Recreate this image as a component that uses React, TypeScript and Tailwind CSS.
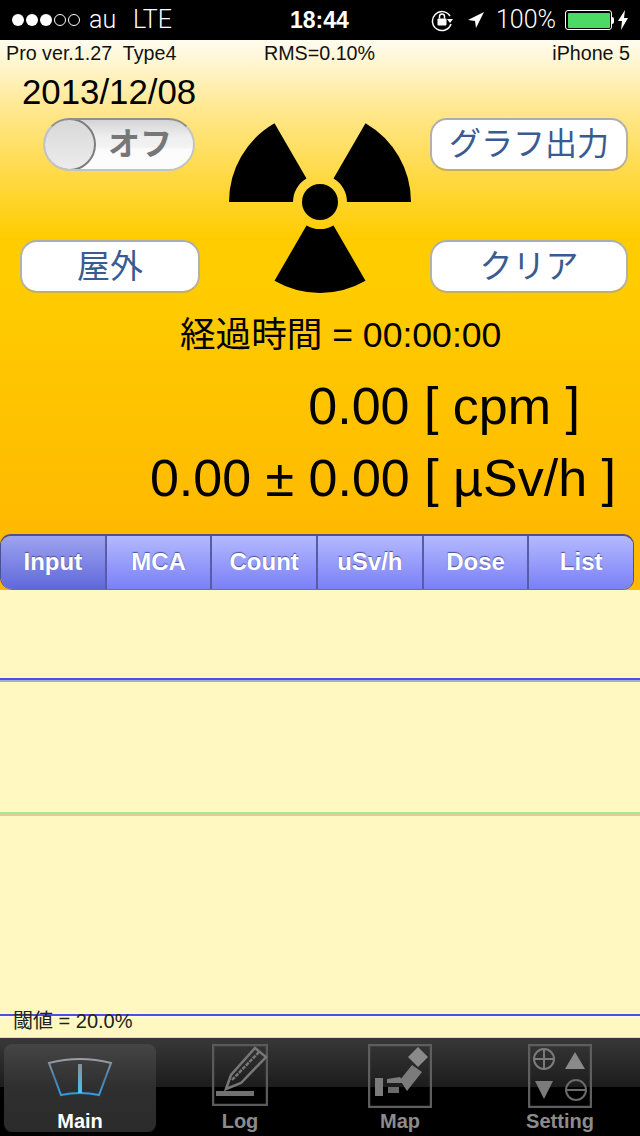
const sans = "font-['Liberation_Sans','Noto_Sans_CJK_JP',sans-serif]";

const tabs = ["Input", "MCA", "Count", "uSv/h", "Dose", "List"];

function StatusBar() {
  return (
    <div className="flex h-10 items-center bg-black text-white font-['Roboto',sans-serif] text-[25px] font-light">
      <div className="ml-[12px] flex w-[68px] gap-[2px]">
        {[1, 1, 1, 0, 0].map((on, i) => (
          <span key={i} className={on ? "size-[12px] rounded-full bg-white" : "size-[12px] rounded-full border border-white"} />
        ))}
      </div>
      <span className="ml-[9px] w-[44px]">au</span>
      <span className="w-[157px]">LTE</span>
      <span className={`w-[141px] text-[23px] font-bold ${sans}`}>18:44</span>
      <svg width="24" height="24" viewBox="0 0 24 24" fill="none" className="-ml-[1px]">
        <path d="M20 8 A9.5 9.5 0 1 0 21 16" stroke="#fff" strokeWidth="1.5" />
        <path d="M17 11h6l-3 4z" fill="#fff" />
        <rect x="7.5" y="10.5" width="9" height="7" rx="1" fill="#fff" />
        <path d="M9.5 10.5V8.5a2.5 2.5 0 0 1 5 0v2" stroke="#fff" strokeWidth="1.5" />
      </svg>
      <svg width="18" height="18" viewBox="0 0 18 18" className="ml-[13px]">
        <path d="M17 1 1 9l7 1 1 7z" fill="#fff" />
      </svg>
      <span className="ml-[11px] w-[69px]">100%</span>
      <div className="flex items-center">
        <div className="h-[20px] w-[47px] rounded-[3px] border border-white p-[1.5px]">
          <div className="h-full w-full rounded-[1px] bg-[#4cd964]" />
        </div>
        <div className="h-[7px] w-[2px] rounded-r-sm bg-white" />
      </div>
      <svg width="10" height="20" viewBox="0 0 10 20" className="ml-[4px]">
        <path d="M7 0 0 11h4l-1 9 7-12H6z" fill="#fff" />
      </svg>
    </div>
  );
}

function RadiationIcon() {
  return (
    <svg width="182" height="182" viewBox="-91 -91 182 182" className="block">
      <circle r="18" fill="#000" />
      <path d="M27 0H91A91 91 0 0 0 45.5 -78.8L13.5 -23.4A27 27 0 0 1 27 0Z" fill="#000" />
      <path d="M-27 0H-91A91 91 0 0 1 -45.5 -78.8L-13.5 -23.4A27 27 0 0 0 -27 0Z" fill="#000" />
      <path d="M-13.5 23.4 -45.5 78.8A91 91 0 0 0 45.5 78.8L13.5 23.4A27 27 0 0 1 -13.5 23.4Z" fill="#000" />
    </svg>
  );
}

function PillButton({ label, className }: { label: string; className: string }) {
  return (
    <div
      className={`flex h-[53px] items-center justify-center rounded-[17px] border-2 border-t-[#a9adb6] border-x-[#b4b2a8] border-b-[#c8ad5c] bg-white leading-none text-[#3a5a94] ${className}`}
    >
      {label}
    </div>
  );
}

function Toggle() {
  return (
    <div className="relative ml-[43px] flex h-[53px] w-[152px] items-center justify-end overflow-hidden rounded-full border-2 border-t-[#8f8f8f] border-x-[#c4c4c4] border-b-[#c2c2c2] bg-[linear-gradient(#d4d4d4,#efefef_35%,#f2f2f2_55%,#fbfbfb_60%,#fdfdfd)] pr-[21px]">
      <span className="text-[32px] font-bold leading-none text-[#777]">オフ</span>
      <div className="absolute -left-[2px] -top-[2px] size-[53px] rounded-full border-2 border-[#7d7d7d] bg-[linear-gradient(#d8d8d8,#ececec)]" />
    </div>
  );
}

function TabStrip() {
  return (
    <div className="mt-[26px] flex h-[57px] w-[634px] overflow-hidden rounded-[11px] rounded-bl-[13px] border border-t-2 border-[#4c5290] border-b-[#6469c4]">
      {tabs.map((t, i) => (
        <div
          key={t}
          className={`flex flex-1 items-center justify-center pb-[1px] text-[24px] font-bold text-white [text-shadow:0_-1px_1px_#4a4f96] ${
            i === 0
              ? "bg-[linear-gradient(#9ea3f0,#5f68da)]"
              : "bg-[linear-gradient(#b4b9ff,#7a80f6)]"
          } ${i > 0 ? "border-l-2 border-[#565ca6]" : ""}`}
        >
          {t}
        </div>
      ))}
    </div>
  );
}

function MainIcon() {
  return (
    <svg width="66" height="42" viewBox="0 0 66 42" fill="none">
      <defs>
        <linearGradient id="gauge" x1="0" y1="0" x2="0" y2="1">
          <stop offset="0" stopColor="#9a9da3" />
          <stop offset="0.5" stopColor="#4b7fa8" />
          <stop offset="1" stopColor="#2f9de0" />
        </linearGradient>
        <linearGradient id="needle" x1="0" y1="0" x2="0" y2="1">
          <stop offset="0" stopColor="#8a8d92" />
          <stop offset="1" stopColor="#45c4f5" />
        </linearGradient>
      </defs>
      <path d="M2 7Q33 -1 64 7L52 39Q33 35 14 39Z" stroke="url(#gauge)" strokeWidth="2" />
      <rect x="31" y="8" width="4" height="29" fill="url(#needle)" />
    </svg>
  );
}

function LogIcon() {
  return (
    <svg width="56" height="62" viewBox="0 0 56 62" fill="none">
      <rect x="1" y="1" width="54" height="60" stroke="#5a5a5a" strokeWidth="2.5" />
      <path d="M14 45 19 31 43 4 54 13 29 39Z" stroke="#777" strokeWidth="2.5" />
      <path d="M20 36 47 8" stroke="#777" strokeWidth="2.5" strokeDasharray="4 1" />
      <rect x="4" y="47" width="38" height="5" fill="#717171" />
    </svg>
  );
}

function MapIcon() {
  return (
    <svg width="64" height="64" viewBox="0 0 64 64" fill="none">
      <rect x="1" y="1" width="62" height="62" stroke="#5e5e5e" strokeWidth="2.5" />
      <path d="M50 3 60 13 50 23 40 13z" fill="#8a8a8a" />
      <path d="M44 21 54 28 39 47 32 36z" fill="#7b7b7b" />
      <rect x="7" y="34" width="8" height="18" fill="#7b7b7b" />
      <path d="M19 35 32 33 36 39H19z" fill="#7b7b7b" />
      <rect x="20" y="43" width="11" height="6" fill="#6a6a6a" />
    </svg>
  );
}

function SettingIcon() {
  return (
    <svg width="64" height="64" viewBox="0 0 64 64" fill="none">
      <rect x="1" y="1" width="62" height="62" stroke="#5e5e5e" strokeWidth="2.5" />
      <circle cx="16" cy="15" r="10" stroke="#7b7b7b" strokeWidth="2" />
      <path d="M6 15H26M16 5V25" stroke="#7b7b7b" strokeWidth="2" />
      <path d="M47 8 57 25H37z" fill="#8a8a8a" />
      <path d="M7 37H25L16 55z" fill="#7b7b7b" />
      <circle cx="48" cy="46" r="10" stroke="#6a6a6a" strokeWidth="2" />
      <path d="M38 46H58" stroke="#6a6a6a" strokeWidth="2" />
    </svg>
  );
}

function BottomTab({ label, active, children }: { label: string; active?: boolean; children: React.ReactNode }) {
  return (
    <div
      className={`flex h-[88px] w-[152px] flex-col items-center justify-between rounded-[8px] ${
        active ? "bg-[linear-gradient(#454545,#2f2f2f_50%,#2b2b2b)] pt-[12px]" : "pt-0"
      }`}
    >
      {children}
      <span className={`text-[20px] font-bold leading-[24px] translate-y-[1px] ${active ? "text-white" : "text-[#8c8c8c]"}`}>
        {label}
      </span>
    </div>
  );
}

export default function App() {
  return (
    <div className={`h-[1136px] w-[640px] overflow-hidden bg-black ${sans}`}>
      <StatusBar />

      <div className="flex h-[550px] flex-col bg-[linear-gradient(#fffcf0,#ffe78c_13%,#ffcc00_36%,#ffcc00_45%,#ffb900_90%)] text-black">
        <div className="flex h-[28px] items-center text-[19.7px] leading-none text-[#111]">
          <span className="w-[264px] whitespace-pre pl-[6px]">Pro ver.1.27  Type4</span>
          <span>RMS=0.10%</span>
          <span className="ml-auto pr-[10px]">iPhone 5</span>
        </div>

        <div className="flex h-[225px]">
          <div className="w-[220px]">
            <div className="flex h-[50px] items-center pl-[22px] text-[34.8px] leading-none">2013/12/08</div>
            <Toggle />
            <div className="ml-[20px] mt-[69px]">
              <PillButton label="屋外" className="w-[180px] text-[33px]" />
            </div>
          </div>
          <div className="ml-[9px] mt-[43px]">
            <RadiationIcon />
          </div>
          <div className="ml-[19px] mt-[50px] flex flex-col gap-[69px]">
            <PillButton label="グラフ出力" className="w-[198px] text-[32px]" />
            <PillButton label="クリア" className="w-[198px] text-[33px]" />
          </div>
        </div>

        <div className="mt-[20px] h-[44px] whitespace-pre pl-[180px] text-[35.6px] leading-[44px]">経過時間 = 00:00:00</div>
        <div className="mt-[19px] h-[60px] whitespace-pre pr-[60px] text-right text-[52px] leading-[60px]">0.00 [ cpm ]</div>
        <div className="mt-[12px] h-[60px] whitespace-pre pr-[24px] text-right text-[52px] leading-[60px]">0.00 ± 0.00 [ µSv/h ]</div>
        <TabStrip />
      </div>

      <div className="h-[448px] bg-[#fff8c0] pt-[88px]">
        <div className="h-[2px] bg-[#4a50e0]" />
        <div className="h-[2px] bg-[#a9a8cf]" />
        <div className="mt-[130px] h-[2px] bg-[#9df08c]" />
        <div className="h-[2px] bg-[#efc59a]" />
        <div className="mt-[198px] h-[2px] bg-[#4a50e0]" />
        <div className="h-[2px] bg-[#fffbe0]" />
        <div className="-mt-[8px] h-[17px] pl-[13px] text-[20px] leading-[22px] text-[#222]">閾値 = 20.0%</div>
        <div className="mt-[10px] h-[3px] bg-[#e6dc9c]" />
      </div>

      <div className="flex h-[98px] justify-between bg-[linear-gradient(#383838,#1c1c1c_50%,#000_50%)] px-[4px] pt-[6px]">
        <BottomTab label="Main" active>
          <MainIcon />
        </BottomTab>
        <BottomTab label="Log">
          <LogIcon />
        </BottomTab>
        <BottomTab label="Map">
          <MapIcon />
        </BottomTab>
        <BottomTab label="Setting">
          <SettingIcon />
        </BottomTab>
      </div>
    </div>
  );
}
